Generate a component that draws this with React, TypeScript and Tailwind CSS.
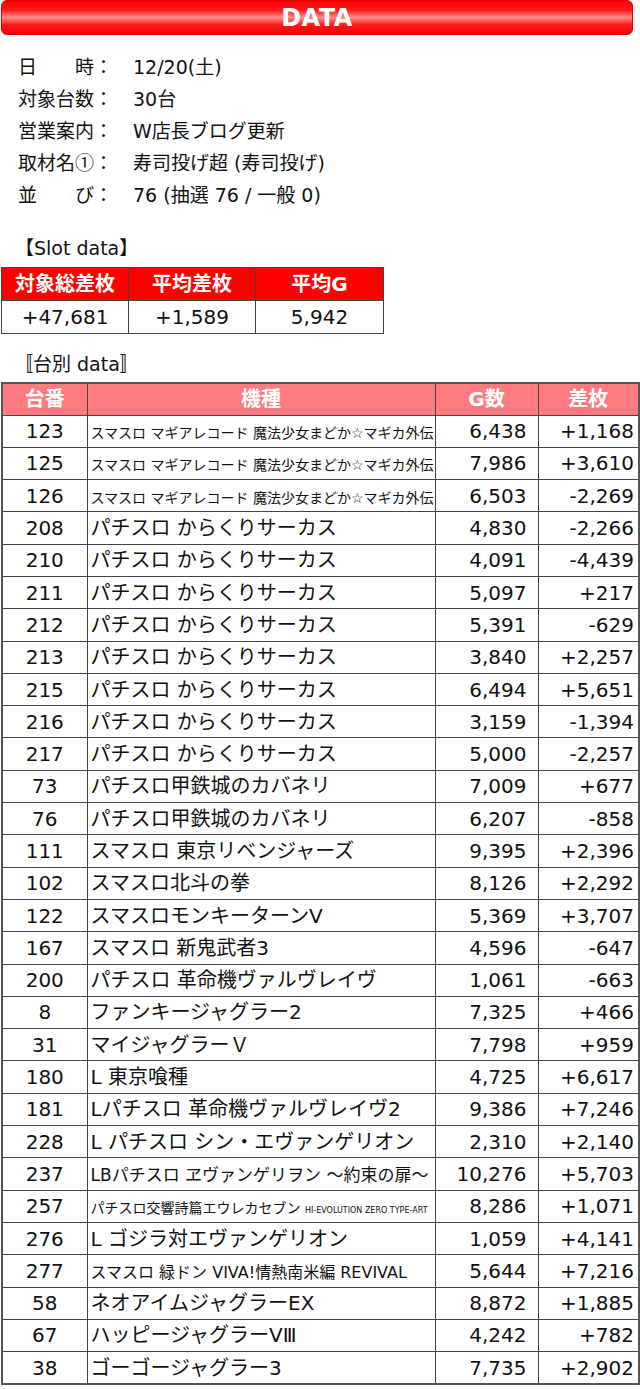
import React from 'react';

type Row = { no: string; name: React.ReactNode; g: string; diff: string };

const MADOKA = 'スマスロ マギアレコード 魔法少女まどか☆マギカ外伝';
const KARAKURI = 'パチスロ からくりサーカス';

const rows: Row[] = [
  { no: '123', name: <span className="text-[14px]">{MADOKA}</span>, g: '6,438', diff: '+1,168' },
  { no: '125', name: <span className="text-[14px]">{MADOKA}</span>, g: '7,986', diff: '+3,610' },
  { no: '126', name: <span className="text-[14px]">{MADOKA}</span>, g: '6,503', diff: '-2,269' },
  { no: '208', name: KARAKURI, g: '4,830', diff: '-2,266' },
  { no: '210', name: KARAKURI, g: '4,091', diff: '-4,439' },
  { no: '211', name: KARAKURI, g: '5,097', diff: '+217' },
  { no: '212', name: KARAKURI, g: '5,391', diff: '-629' },
  { no: '213', name: KARAKURI, g: '3,840', diff: '+2,257' },
  { no: '215', name: KARAKURI, g: '6,494', diff: '+5,651' },
  { no: '216', name: KARAKURI, g: '3,159', diff: '-1,394' },
  { no: '217', name: KARAKURI, g: '5,000', diff: '-2,257' },
  { no: '73', name: 'パチスロ甲鉄城のカバネリ', g: '7,009', diff: '+677' },
  { no: '76', name: 'パチスロ甲鉄城のカバネリ', g: '6,207', diff: '-858' },
  { no: '111', name: 'スマスロ 東京リベンジャーズ', g: '9,395', diff: '+2,396' },
  { no: '102', name: 'スマスロ北斗の拳', g: '8,126', diff: '+2,292' },
  { no: '122', name: 'スマスロモンキーターンV', g: '5,369', diff: '+3,707' },
  { no: '167', name: 'スマスロ 新鬼武者3', g: '4,596', diff: '-647' },
  { no: '200', name: 'パチスロ 革命機ヴァルヴレイヴ', g: '1,061', diff: '-663' },
  { no: '8', name: 'ファンキージャグラー2', g: '7,325', diff: '+466' },
  { no: '31', name: 'マイジャグラーＶ', g: '7,798', diff: '+959' },
  { no: '180', name: 'L 東京喰種', g: '4,725', diff: '+6,617' },
  { no: '181', name: 'Lパチスロ 革命機ヴァルヴレイヴ2', g: '9,386', diff: '+7,246' },
  { no: '228', name: 'L パチスロ シン・エヴァンゲリオン', g: '2,310', diff: '+2,140' },
  {
    no: '237',
    name: <span className="text-[17px]">LBパチスロ ヱヴァンゲリヲン ～約束の扉～</span>,
    g: '10,276',
    diff: '+5,703',
  },
  {
    no: '257',
    name: (
      <span className="text-[14px]">
        パチスロ交響詩篇エウレカセブン <span className="text-[8px]">HI-EVOLUTION ZERO TYPE-ART</span>
      </span>
    ),
    g: '8,286',
    diff: '+1,071',
  },
  { no: '276', name: 'L ゴジラ対エヴァンゲリオン', g: '1,059', diff: '+4,141' },
  {
    no: '277',
    name: <span className="text-[16px]">スマスロ 緑ドン VIVA!情熱南米編 REVIVAL</span>,
    g: '5,644',
    diff: '+7,216',
  },
  { no: '58', name: 'ネオアイムジャグラーEX', g: '8,872', diff: '+1,885' },
  { no: '67', name: 'ハッピージャグラーVⅢ', g: '4,242', diff: '+782' },
  { no: '38', name: 'ゴーゴージャグラー3', g: '7,735', diff: '+2,902' },
];

const info: { label: React.ReactNode; value: string }[] = [
  { label: '日　　時', value: '12/20(土)' },
  { label: '対象台数', value: '30台' },
  { label: '営業案内', value: 'W店長ブログ更新' },
  {
    label: (
      <>
        取材名<span className="font-['Noto_Sans_CJK_JP',sans-serif]">①</span>
      </>
    ),
    value: '寿司投げ超 (寿司投げ)',
  },
  { label: '並　　び', value: '76 (抽選 76 / 一般 0)' },
];

export default function App() {
  return (
    <div className="w-[640px] bg-white text-[#111] font-['DejaVu_Sans','Noto_Sans_CJK_JP',sans-serif]">
      {/* Title bar */}
      <div className="ml-[1px] w-[632px] h-[35px] rounded-[6px] border border-[#dd0000] bg-[linear-gradient(to_bottom,#ff0000_0%,#ff1a1a_28%,#ff8c8c_50%,#ff1a1a_72%,#f00000_100%)] flex items-center justify-center">
        <span className="text-white font-bold text-[24px] tracking-[0.5px]">DATA</span>
      </div>

      {/* Info */}
      <div className="pt-[16px] pl-[18px] text-[19px]">
        {info.map((r, i) => (
          <div key={i} className="h-[32px] flex items-center">
            <span className="w-[115px] shrink-0">{r.label}：</span>
            <span>{r.value}</span>
          </div>
        ))}
      </div>

      {/* Slot data */}
      <div className="mt-[21px] h-[32px] flex items-center pl-[15px] text-[19px]">【Slot data】</div>
      <table className="mt-[3px] ml-[1px] border-collapse table-fixed w-[382px] text-[20px]">
        <tbody>
          <tr className="h-[33px] bg-[#ff0000] text-white font-bold">
            <td className="w-[127px] border border-[#444] text-center">対象総差枚</td>
            <td className="w-[127px] border border-[#444] text-center">平均差枚</td>
            <td className="w-[128px] border border-[#444] text-center">平均G</td>
          </tr>
          <tr className="h-[33px]">
            <td className="border border-[#444] text-center">+47,681</td>
            <td className="border border-[#444] text-center">+1,589</td>
            <td className="border border-[#444] text-center">5,942</td>
          </tr>
        </tbody>
      </table>

      {/* Per-machine data */}
      <div className="mt-[14px] h-[32px] flex items-center pl-[14px] text-[19px]">〚台別 data〛</div>
      <table className="mt-[2px] ml-[1px] border-collapse table-fixed w-[637px] text-[20px] border-2 border-[#555]">
        <thead>
          <tr className="h-[32px] bg-[#ff7b7f] text-white font-bold">
            <th className="w-[85px] border border-[#444] font-bold leading-none">台番</th>
            <th className="w-[348px] border border-[#444] font-bold leading-none">機種</th>
            <th className="w-[103px] border border-[#444] font-bold leading-none">G数</th>
            <th className="w-[101px] border border-[#444] font-bold leading-none">差枚</th>
          </tr>
        </thead>
        <tbody>
          {rows.map((r, i) => (
            <tr key={i} className="h-[32.3px]">
              <td className="border border-[#444] text-center leading-none">{r.no}</td>
              <td className="border border-[#444] pl-[3px] whitespace-nowrap overflow-hidden leading-none">
                {r.name}
              </td>
              <td className="border border-[#444] text-right pr-[11px] leading-none">{r.g}</td>
              <td className="border border-[#444] text-right pr-[4px] leading-none">{r.diff}</td>
            </tr>
          ))}
        </tbody>
      </table>
    </div>
  );
}
